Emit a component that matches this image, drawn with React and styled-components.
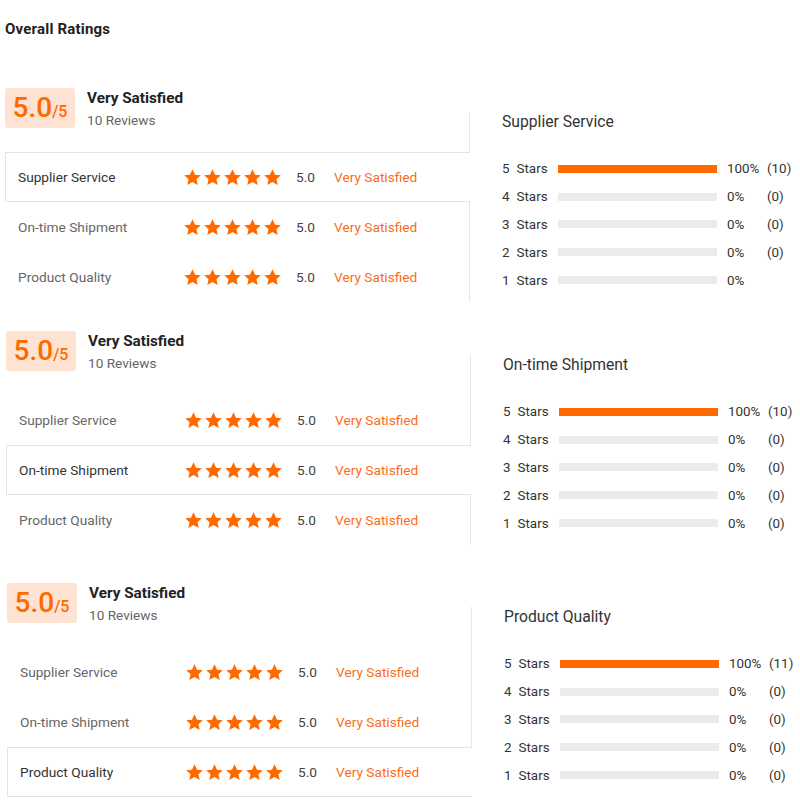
import React from "react";
import styled, { createGlobalStyle } from "styled-components";

const Global = createGlobalStyle`
  html, body { margin: 0; padding: 0; background: #fff; }
  body { font-family: Roboto, "Liberation Sans", Arial, sans-serif; color: #333; }
`;

const Page = styled.div`
  width: 800px;
  height: 800px;
  overflow: hidden;
  padding: 19px 0 0 5px;
  box-sizing: border-box;
`;

const Title = styled.h2`
  margin: 0;
  font-size: 15px;
  line-height: 20px;
  font-weight: 700;
  letter-spacing: 0.2px;
  color: #222;
`;

const Block = styled.section`
  display: flex;
  margin-top: ${(p) => p.$top}px;
  margin-left: ${(p) => p.$shift}px;
`;

const Left = styled.div`
  width: 465px;
  flex: none;
`;

const Head = styled.div`
  display: flex;
  align-items: flex-start;
  gap: 12px;
  height: 40px;
  margin-bottom: -16px;
  position: relative;
`;

const ScoreBox = styled.div`
  width: 70px;
  height: 40px;
  box-sizing: border-box;
  background: #fee3d2;
  border-radius: 3px;
  display: flex;
  align-items: baseline;
  justify-content: center;
  padding-top: 1px;
  color: #ff6a00;
`;

const Big = styled.span`
  font-size: 28px;
  line-height: 38px;
  font-weight: 500;
`;

const Small = styled.span`
  font-size: 16px;
  font-weight: 500;
`;

const HeadText = styled.div`
  display: flex;
  flex-direction: column;
  padding-top: 1px;
`;

const HeadTitle = styled.span`
  font-size: 15.3px;
  line-height: 18px;
  font-weight: 700;
  color: #222;
`;

const HeadSub = styled.span`
  font-size: 13.6px;
  line-height: 26px;
  color: #666;
`;

const List = styled.div`
  border-right: 1px solid #e6e6e6;
  padding-top: 40px;
`;

const Row = styled.div`
  display: flex;
  align-items: center;
  height: 50px;
  box-sizing: border-box;
  padding-left: 12px;
  border: 1px solid ${(p) => (p.$active ? "#e4e4e4" : "transparent")};
  border-right: none;
  margin-right: ${(p) => (p.$active ? "-1px" : "0")};
  background: #fff;
  position: relative;
`;

const RowLabel = styled.span`
  width: 166px;
  font-size: 13.7px;
  color: ${(p) => (p.$active ? "#333" : "#666")};
`;

const Stars = styled.span`
  display: flex;
  gap: 1px;
  width: 113px;
  margin-left: -1px;
`;

const RowScore = styled.span`
  width: 38px;
  font-size: 13.7px;
  color: #444;
`;

const RowVerdict = styled.span`
  font-size: 13.7px;
  color: #fa6d1c;
`;

const Right = styled.div`
  flex: 1;
  padding: 24px 0 0 32px;
`;

const RightTitle = styled.div`
  font-size: 15.7px;
  line-height: 20px;
  color: #333;
  margin-bottom: 23px;
`;

const BarRow = styled.div`
  display: flex;
  align-items: center;
  height: 27.8px;
  font-size: 13.4px;
  color: #333;
`;

const BarLabel = styled.span`
  width: 56px;
  display: flex;
  gap: 7px;
`;

const Track = styled.div`
  width: 159px;
  height: 8px;
  background: #ebebef;
  margin-right: 10px;
`;

const Fill = styled.div`
  height: 100%;
  background: #ff6a00;
`;

const Pct = styled.span`
  width: 40px;
`;

const Star = () => (
  <svg width="19" height="19" viewBox="0 0 24 24">
    <path
      fill="#ff6a00"
      d="M12 1.5l3.2 6.9 7.3.8-5.5 5 1.6 7.4L12 17.8l-6.6 3.8L7 14.2l-5.5-5 7.3-.8z"
    />
  </svg>
);

const CATS = ["Supplier Service", "On-time Shipment", "Product Quality"];

const blocks = [
  { top: 49, shift: 0, active: 0, counts: ["(10)", "(0)", "(0)", "(0)", ""] },
  { top: 29, shift: 1, active: 1, counts: ["(10)", "(0)", "(0)", "(0)", "(0)"] },
  { top: 38, shift: 2, active: 2, counts: ["(11)", "(0)", "(0)", "(0)", "(0)"] },
];

export default function App() {
  return (
    <>
      <Global />
      <Page>
        <Title>Overall Ratings</Title>
        {blocks.map((b, bi) => (
          <Block key={bi} $top={b.top} $shift={b.shift}>
            <Left>
              <Head>
                <ScoreBox>
                  <Big>5.0</Big>
                  <Small>/5</Small>
                </ScoreBox>
                <HeadText>
                  <HeadTitle>Very Satisfied</HeadTitle>
                  <HeadSub>10 Reviews</HeadSub>
                </HeadText>
              </Head>
              <List>
                {CATS.map((c, i) => (
                  <Row key={c} $active={i === b.active}>
                    <RowLabel $active={i === b.active}>{c}</RowLabel>
                    <Stars>
                      {[0, 1, 2, 3, 4].map((s) => (
                        <Star key={s} />
                      ))}
                    </Stars>
                    <RowScore>5.0</RowScore>
                    <RowVerdict>Very Satisfied</RowVerdict>
                  </Row>
                ))}
              </List>
            </Left>
            <Right>
              <RightTitle>{CATS[b.active]}</RightTitle>
              {[5, 4, 3, 2, 1].map((n, i) => (
                <BarRow key={n}>
                  <BarLabel>
                    <span>{n}</span>
                    <span>Stars</span>
                  </BarLabel>
                  <Track>
                    <Fill style={{ width: n === 5 ? "100%" : "0%" }} />
                  </Track>
                  <Pct>{n === 5 ? "100%" : "0%"}</Pct>
                  <span>{b.counts[i]}</span>
                </BarRow>
              ))}
            </Right>
          </Block>
        ))}
      </Page>
    </>
  );
}
